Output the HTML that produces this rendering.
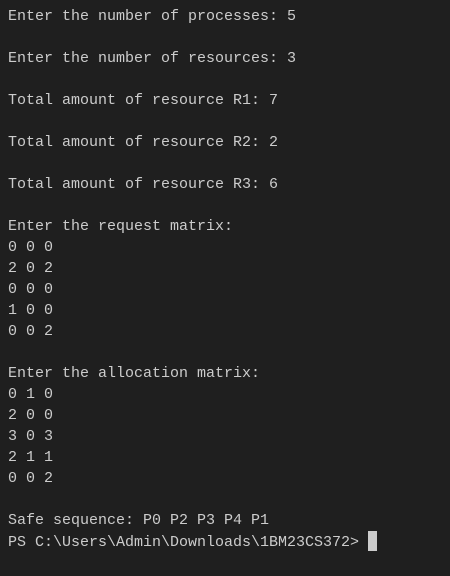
<!DOCTYPE html>
<html><head><style>
html,body{margin:0;padding:0;background:#1f1f1f;width:450px;height:576px;overflow:hidden}
pre{margin:0;padding:6px 0 0 8px;font-family:"Liberation Mono","DejaVu Sans Mono",monospace;font-size:15px;line-height:21px;color:#cccccc}
.cur{display:inline-block;width:9px;height:20px;background:#cccccc;vertical-align:-5px;margin-left:9px}
</style></head><body><pre>Enter the number of processes: 5

Enter the number of resources: 3

Total amount of resource R1: 7

Total amount of resource R2: 2

Total amount of resource R3: 6

Enter the request matrix:
0 0 0
2 0 2
0 0 0
1 0 0
0 0 2

Enter the allocation matrix:
0 1 0
2 0 0
3 0 3
2 1 1
0 0 2

Safe sequence: P0 P2 P3 P4 P1
PS C:\Users\Admin\Downloads\1BM23CS372&gt;<span class="cur"></span></pre></body></html>
